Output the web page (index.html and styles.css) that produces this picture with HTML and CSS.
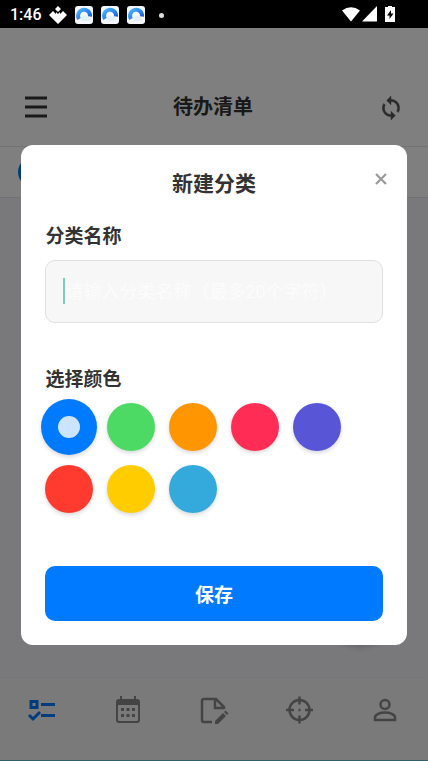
FILE: index.html
```html
<!DOCTYPE html>
<html lang="zh-CN">
<head>
<meta charset="utf-8">
<meta name="viewport" content="width=device-width, initial-scale=1">
<title>待办清单</title>
<link rel="stylesheet" href="styles.css">
</head>
<body>
<svg class="defs" aria-hidden="true">
  <defs>
    <linearGradient id="arc" x1="0" y1="0" x2="1" y2="1"><stop offset="0" stop-color="#48b4ff"/><stop offset="1" stop-color="#1857dd"/></linearGradient>
    <symbol id="app" viewBox="0 0 18 18">
      <rect width="18" height="18" rx="3" fill="#f4f8fc"/>
      <path d="M4 13A6 6 0 1 1 15 10.500" fill="none" stroke="url(#arc)" stroke-width="4"/>
      <path d="M7 15a3 3 0 0 1 1-5 4 4 0 0 1 5 1 3 3 0 0 1 2 4z" fill="#e3f0fb"/>
    </symbol>
  </defs>
</svg>
<div class="status">
  <span class="clock">1:46</span>
  <svg class="drop" viewBox="0 0 18 18"><path d="M9 0l3 3-3 3-3-3zM4 5l3 3V6l2 2 2-2v2l3-3 4 4-9 9-9-9z" fill="#fff"/></svg>
  <svg class="app"><use href="#app"/></svg>
  <svg class="app"><use href="#app"/></svg>
  <svg class="app"><use href="#app"/></svg>
  <span class="dot"></span>
  <svg class="signals" viewBox="0 0 54 18" fill="#fff">
    <path d="M0 4.500Q9-2 18 4.500L9 15.500z"/><path d="M20 15.500L35 0v15.500z"/>
    <path fill-rule="evenodd" d="M46 0h4v1h3v15H43V1h3zM49 4l-4 5.500h2.500V13l4-5.500H49z"/>
  </svg>
</div>
<div class="screen">
  <header class="topbar">
    <button class="icon-btn" aria-label="菜单"><svg class="menu-icon" viewBox="0 0 22 22"><path d="M0 2h22M0 11h22M0 20h22" stroke="#333" stroke-width="3"/></svg></button>
    <h1>待办清单</h1>
    <button class="icon-btn" aria-label="同步"><svg class="sync-icon" viewBox="0 0 24 24"><path fill="#555" stroke="#555" stroke-width=".4" d="M12 4V1L8 5l4 4V6c3.310 0 6 2.690 6 6 0 1.010-.25 1.970-.7 2.800l1.460 1.460A7.930 7.930 0 0 0 20 12c0-4.420-3.580-8-8-8zm0 14c-3.310 0-6-2.690-6-6 0-1.010.25-1.970.7-2.800L5.240 7.740A7.930 7.930 0 0 0 4 12c0 4.420 3.580 8 8 8v3l4-4-4-4z"/></svg></button>
  </header>
  <div class="filters"><span class="chip"></span></div>
  <main class="list"><span class="fab"></span></main>
  <nav class="tabs">
    <a href="#todo" aria-label="待办"><svg viewBox="0 0 32 32" fill="none" stroke="#007aff" stroke-width="3"><path d="M4 8.500h6v6H4zM14 11.500h14M14 22.500h14M2 22l4 4 7-7"/></svg></a>
    <a href="#calendar" aria-label="日历"><svg viewBox="0 0 32 32"><path fill="#888" fill-rule="evenodd" d="M8 3h2v3h12V3h2v3h1a3 3 0 0 1 3 3v18a3 3 0 0 1-3 3H7a3 3 0 0 1-3-3V9a3 3 0 0 1 3-3h1zM6 12v14.500q0 1.500 1.500 1.500h17q1.500 0 1.500-1.500V12zM9 15h3v3H9zm5.500 0h3v3h-3zm5.500 0h3v3h-3zM9 21h3v3H9zm5.500 0h3v3h-3zm5.500 0h3v3h-3z"/></svg></a>
    <a href="#notes" aria-label="笔记"><svg viewBox="0 0 32 32" fill="none" stroke="#888" stroke-width="2.500"><path d="M14 29H6a2 2 0 0 1-2-2V8a2 2 0 0 1 2-2h12l8 8v2M17 6v9h9"/><path fill="#888" stroke="none" d="M17 28l8-8 3 3-8 8h-3zM26 19l1.500-1.500 3 3L29 22z"/></svg></a>
    <a href="#focus" aria-label="专注"><svg viewBox="0 0 32 32" fill="none" stroke="#888" stroke-width="2.500"><circle cx="15.500" cy="17" r="10"/><path d="M15.500 3.500v8M15.500 22.500v8M2 17h8M21 17h8M14.500 17h2"/></svg></a>
    <a href="#profile" aria-label="我的"><svg viewBox="0 0 32 32" fill="none" stroke="#888" stroke-width="2.500"><circle cx="16" cy="11.500" r="4.500"/><path d="M6 27v-2.500c0-3 5-5 10-5s10 2 10 5V27z"/></svg></a>
  </nav>
  <div class="overlay">
    <form class="dialog">
      <div class="dialog-head">
        <h2>新建分类</h2>
        <button class="close" type="button" aria-label="关闭"><svg viewBox="0 0 12 12"><path d="M1 1l10 10M11 1L1 11" stroke="#999" stroke-width="2.200"/></svg></button>
      </div>
      <label class="label" for="name">分类名称</label>
      <div class="field"><span class="caret"></span><input id="name" type="text" placeholder="请输入分类名称（最多20个字符）"></div>
      <fieldset>
        <legend class="label">选择颜色</legend>
        <div class="colors">
          <input class="blue" type="radio" name="color" aria-label="蓝色" checked>
          <input class="green" type="radio" name="color" aria-label="绿色">
          <input class="orange" type="radio" name="color" aria-label="橙色">
          <input class="pink" type="radio" name="color" aria-label="粉色">
          <input class="purple" type="radio" name="color" aria-label="紫色">
          <input class="red" type="radio" name="color" aria-label="红色">
          <input class="yellow" type="radio" name="color" aria-label="黄色">
          <input class="cyan" type="radio" name="color" aria-label="青色">
        </div>
      </fieldset>
      <button class="save" type="button">保存</button>
    </form>
  </div>
</div>
</body>
</html>
```
FILE: styles.css
```css
* { box-sizing: border-box; }
body {
  margin: 0;
  min-height: 100vh;
  display: flex;
  flex-direction: column;
  font-family: Roboto, "Noto Sans CJK SC", sans-serif;
  color: #333;
}
button { border: 0; padding: 0; background: none; color: inherit; font: inherit; }
svg { display: block; }
h1, h2 { margin: 0; font-weight: 700; }
.defs { position: absolute; width: 0; height: 0; }

.status {
  display: flex;
  align-items: center;
  gap: 8px;
  height: 28px;
  padding: 2px 32px 0 10px;
  background: #000;
  color: #fff;
}
.clock { font-size: 16px; font-weight: 500; line-height: 26px; }
.drop, .app { width: 18px; height: 18px; }
.drop { margin-left: -1px; }
.dot { width: 5px; height: 5px; margin-left: 6px; border-radius: 50%; background: #ddd; }
.signals { width: 54px; height: 18px; margin-left: auto; }

.screen {
  position: relative;
  flex: 1;
  display: flex;
  flex-direction: column;
  background: #f2f2f7;
}
.topbar {
  display: flex;
  align-items: center;
  justify-content: space-between;
  height: 119px;
  padding: 40px 26px 0 24px;
  background: #fff;
  border-bottom: 1px solid #e5e5ea;
}
.topbar h1 { font-size: 20px; line-height: 28px; }
.icon-btn { display: grid; place-items: center; width: 24px; height: 24px; }
.menu-icon { width: 22px; height: 22px; }
.sync-icon { width: 26px; height: 26px; }
.filters {
  display: flex;
  align-items: center;
  height: 51px;
  padding: 0 18px;
  background: #fff;
  border-bottom: 1px solid #e5e5ea;
}
.chip { width: 80px; height: 30px; border-radius: 15px; background: #007aff; }
.list { flex: 1; display: flex; align-items: flex-end; justify-content: flex-end; padding: 36px 44px; }
.fab { width: 48px; height: 48px; border-radius: 50%; background: #007aff; box-shadow: 0 3px 8px rgba(0, 0, 0, .4); }
.tabs {
  display: grid;
  grid-template-columns: repeat(5, 1fr);
  height: 84px;
  padding-top: 15px;
  background: #f5f5f7;
  border-top: 1px solid #ececf0;
  border-bottom: 1px solid #60c0d8;
}
.tabs a { display: flex; justify-content: center; }
.tabs svg { width: 32px; height: 32px; }

.overlay {
  position: absolute;
  inset: 0;
  display: flex;
  align-items: center;
  justify-content: center;
  background: rgba(0, 0, 0, .5);
}
.dialog {
  width: 90%;
  padding: 24px;
  border-radius: 12px;
  background: #fff;
}
.dialog-head { position: relative; text-align: center; }
.dialog-head h2 { font-size: 21px; line-height: 31px; }
.close { position: absolute; top: 0; right: -8px; display: grid; place-items: center; width: 20px; height: 20px; }
.close svg { width: 12px; height: 12px; }
.label { display: block; padding: 0; font-size: 19px; font-weight: 700; line-height: 27px; }
.dialog > .label { margin-top: 23px; }
.field {
  display: flex;
  align-items: center;
  height: 63px;
  margin-top: 10px;
  padding: 0 17px;
  border: 1px solid #e0e0e0;
  border-radius: 10px;
  background: #f7f7f7;
}
.caret { width: 2px; height: 26px; background: #80c9be; }
.field input {
  flex: 1;
  min-width: 0;
  padding: 0;
  border: 0;
  outline: 0;
  background: none;
  font: inherit;
  font-size: 18px;
}
.field input::placeholder { color: #fcfcfc; opacity: 1; }
fieldset { margin: 43px 0 0; padding: 0; border: 0; min-width: 0; }
.colors { display: flex; flex-wrap: wrap; gap: 14px; margin-top: 10px; }
.colors input {
  appearance: none;
  display: grid;
  place-items: center;
  width: 48px;
  height: 48px;
  margin: 0;
  border-radius: 50%;
  box-shadow: 0 2px 4px rgba(0, 0, 0, .16);
}
.colors input:checked { width: 56px; height: 56px; margin: -4px; }
.colors input:checked::after { content: ""; width: 22px; height: 22px; border-radius: 50%; background: rgba(255, 255, 255, .8); }
.blue { background: #007aff; }
.green { background: #4cd964; }
.orange { background: #ff9500; }
.pink { background: #ff2d55; }
.purple { background: #5856d6; }
.red { background: #ff3b30; }
.yellow { background: #ffcc00; }
.cyan { background: #34aadc; }
.save {
  display: block;
  width: 100%;
  height: 55px;
  margin-top: 53px;
  border-radius: 10px;
  background: #007aff;
  color: #fff;
  font-size: 19px;
  font-weight: 700;
}
```
